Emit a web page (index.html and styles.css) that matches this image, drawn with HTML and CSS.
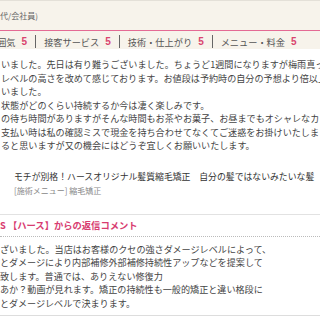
FILE: index.html
```html
<!DOCTYPE html>
<html lang="ja">
<head>
    <meta charset="UTF-8">
    <meta name="viewport" content="width=device-width, initial-scale=1.0">
    <title>口コミ</title>
    <link rel="stylesheet" href="styles.css">
</head>
<body>
    <div class="review">
        <div class="review-head">
            <p class="reviewer">代/会社員)</p>
            <ul class="ratings">
                <li class="rate"><span class="rate-label">雰囲気</span><span class="rate-num">5</span></li>
                <li class="rate"><span class="rate-label">接客サービス</span><span class="rate-num">5</span></li>
                <li class="rate"><span class="rate-label">技術・仕上がり</span><span class="rate-num">5</span></li>
                <li class="rate"><span class="rate-label">メニュー・料金</span><span class="rate-num">5</span></li>
            </ul>
        </div>

        <p class="review-body">
            いました。先日は有り難うございました。ちょうど1週間になりますが梅雨真っ只<br>
            レベルの高さを改めて感じております。お値段は予約時の自分の予想より倍以上<br>
            いました。<br>
            状態がどのくらい持続するか今は凄く楽しみです。<br>
            の待ち時間がありますがそんな時間もお茶やお菓子、お昼までもオシャレなカ<br>
            支払い時は私の確認ミスで現金を持ち合わせてなくてご迷惑をお掛けいたしまし<br>
            ると思いますが又の機会にはどうぞ宜しくお願いいたします。
        </p>

        <div class="menu-info">
            <p class="style-title">モチが別格！ハースオリジナル髪質縮毛矯正　自分の髪ではないみたいな髪</p>
            <p class="menu-name">[施術メニュー] 縮毛矯正</p>
        </div>

        <div class="reply">
            <h3 class="reply-title">S 【ハース】からの返信コメント</h3>
            <p class="reply-body">
                ざいました。当店はお客様のクセの強さダメージレベルによって、<br>
                とダメージにより内部補修外部補修持続性アップなどを提案して<br>
                致します。普通では、ありえない修復力<br>
                あか？動画が見れます。矯正の持続性も一般的矯正と違い格段に<br>
                とダメージレベルで決まります。
            </p>
        </div>
    </div>
</body>
</html>
```

FILE: styles.css
```css
body {
    margin: 0;
    font-family: "Noto Sans CJK JP", "Noto Sans", sans-serif;
    color: #444;
    background-color: #fff;
    overflow: hidden;
}

.review {
    width: 320px;
    overflow: hidden;
}

.review-head {
    background-color: #f7f3eb;
    border-top: 1px solid #e4e0d8;
    padding-bottom: 1px;
}

.reviewer {
    margin: 0;
    height: 29px;
    line-height: 29px;
    font-size: 8px;
    color: #666;
    border-bottom: 1px solid #e46a94;
}

.ratings {
    display: flex;
    list-style: none;
    margin: 0 0 0 -12px;
    padding: 4px 0 0;
}

.rate {
    display: flex;
    align-items: center;
    padding: 0 8px;
    height: 13px;
    font-size: 9.2px;
    color: #555;
    border-left: 1px solid #666;
    white-space: nowrap;
}

.rate:first-child {
    border-left: none;
    padding-left: 0;
}

.rate-num {
    margin-left: 6px;
    color: #d9456f;
    font-weight: bold;
    font-family: "Liberation Sans", Arial, sans-serif;
    font-size: 10px;
}

.review-body {
    margin: 9px 0 0;
    padding-left: 1px;
    font-size: 9.1px;
    line-height: 13.5px;
    white-space: nowrap;
    overflow: hidden;
}

.menu-info {
    margin-top: 17px;
    padding: 0 0 16px 14px;
    border-bottom: 1px solid #e2e2e2;
}

.style-title {
    margin: 0;
    font-size: 8.85px;
    line-height: 14px;
    color: #333;
    white-space: nowrap;
    overflow: hidden;
}

.menu-name {
    margin: 0;
    font-size: 8px;
    line-height: 14px;
    color: #888;
}

.reply {
    padding-top: 3px;
    border-bottom: 1px solid #ddd;
}

.reply-title {
    margin: 0;
    padding-bottom: 4px;
    font-size: 9.3px;
    line-height: 14px;
    font-weight: bold;
    color: #d83c70;
    border-bottom: 1px dotted #bbb;
}

.reply-body {
    margin: 6px 0 0;
    padding-bottom: 5px;
    font-size: 9.1px;
    line-height: 13.5px;
    white-space: nowrap;
}
```
